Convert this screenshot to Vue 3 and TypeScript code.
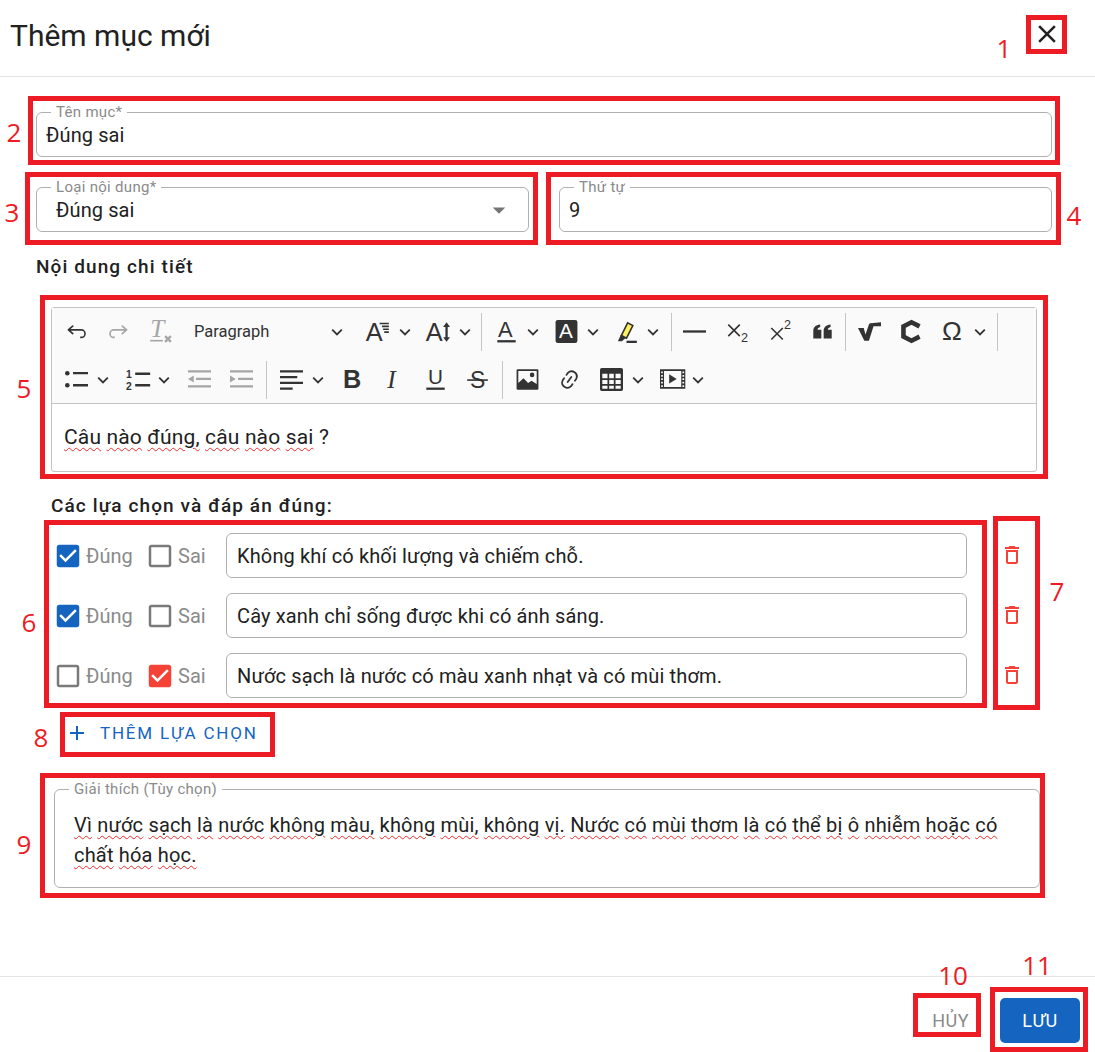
<script setup lang="ts">
// Hộp thoại "Thêm mục mới" với các chú thích đỏ đánh số
type Tool = { icon: string; w: number; chevron?: boolean; off?: boolean } | { sep: true; ml?: number; mr?: number }

const row1: Tool[] = [
  { icon: 'undo', w: 42 },
  { icon: 'redo', w: 42, off: true },
  { icon: 'clear', w: 42, off: true },
  { icon: 'paragraph', w: 176, chevron: true },
  { icon: 'fontsize', w: 60, chevron: true },
  { icon: 'lineheight', w: 60, chevron: true },
  { sep: true },
  { icon: 'fontcolor', w: 60, chevron: true },
  { icon: 'bgcolor', w: 60, chevron: true },
  { icon: 'highlight', w: 62, chevron: true },
  { sep: true, ml: 4, mr: 1 },
  { icon: 'hr', w: 43 },
  { icon: 'sub', w: 43 },
  { icon: 'sup', w: 42 },
  { icon: 'quote', w: 42 },
  { sep: true, ml: 2, mr: 2 },
  { icon: 'sqrt', w: 42 },
  { icon: 'hex', w: 42 },
  { icon: 'omega', w: 61, chevron: true },
  { sep: true }
]

const row2: Tool[] = [
  { icon: 'bullet', w: 61, chevron: true },
  { icon: 'number', w: 62, chevron: true },
  { icon: 'outdent', w: 42, off: true },
  { icon: 'indent', w: 42, off: true },
  { sep: true },
  { icon: 'align', w: 60, chevron: true },
  { icon: 'bold', w: 42 },
  { icon: 'italic', w: 42 },
  { icon: 'underline', w: 42 },
  { icon: 'strike', w: 42 },
  { sep: true },
  { icon: 'image', w: 42 },
  { icon: 'link', w: 42 },
  { icon: 'table', w: 60, chevron: true },
  { icon: 'video', w: 60, chevron: true }
]

const choices = [
  { text: 'Không khí có khối lượng và chiếm chỗ.', correct: true },
  { text: 'Cây xanh chỉ sống được khi có ánh sáng.', correct: true },
  { text: 'Nước sạch là nước có màu xanh nhạt và có mùi thơm.', correct: false }
]

const explainOne = ['Vì', 'nước', 'sạch', 'là', 'nước', 'không', 'màu,', 'không', 'mùi,', 'không', 'vị.', 'Nước', 'có', 'mùi', 'thơm', 'là', 'có', 'thể', 'bị', 'ô', 'nhiễm', 'hoặc', 'có']
const explainTwo = ['chất', 'hóa', 'học.']
const question = ['Câu', 'nào', 'đúng,', 'câu', 'nào', 'sai']

// Khung chú thích đỏ: x, y, rộng, cao
const marks = [
  [1026, 15, 41, 39],
  [28, 96, 1032, 69],
  [25, 172, 513, 73],
  [546, 172, 515, 73],
  [40, 295, 1008, 184],
  [44, 520, 943, 188],
  [993, 516, 47, 194],
  [60, 712, 215, 45],
  [40, 773, 1005, 125],
  [913, 993, 68, 44],
  [990, 987, 98, 65]
]

const labels = [
  ['1', 1004, 48], ['2', 14, 132], ['3', 12, 212], ['4', 1074, 215], ['5', 24, 388], ['6', 29, 622],
  ['7', 1057, 591], ['8', 41, 737], ['9', 24, 844], ['10', 953, 975], ['11', 1037, 965]
] as const
</script>

<template>
  <div class="dialog">
    <header class="head">
      <h2 class="title">Thêm mục mới</h2>
      <button class="close" aria-label="Đóng">
        <svg viewBox="0 0 24 24" width="30" height="30"><path d="M19 6.41 17.59 5 12 10.59 6.41 5 5 6.41 10.59 12 5 17.59 6.41 19 12 13.41 17.59 19 19 17.59 13.41 12z" /></svg>
      </button>
    </header>

    <main class="body">
      <fieldset class="field">
        <legend>Tên mục*</legend>
        <div class="value">Đúng sai</div>
      </fieldset>

      <div class="pair">
        <fieldset class="field select">
          <legend>Loại nội dung*</legend>
          <div class="value">Đúng sai</div>
          <svg class="caret" viewBox="0 0 24 24" width="30" height="30"><path d="M7 10l5 5 5-5z" /></svg>
        </fieldset>
        <fieldset class="field">
          <legend>Thứ tự</legend>
          <div class="value">9</div>
        </fieldset>
      </div>

      <div class="section">Nội dung chi tiết</div>

      <div class="editor">
        <div class="toolbar">
          <div v-for="(row, r) in [row1, row2]" :key="r" class="tool-row">
            <template v-for="(tool, i) in row" :key="i">
              <span
                v-if="'sep' in tool"
                class="sep"
                :style="{ marginLeft: (tool.ml ?? 4) + 'px', marginRight: (tool.mr ?? 3) + 'px' }"
              ></span>
              <span v-else class="tool" :class="{ off: tool.off }" :style="{ width: tool.w + 'px' }">
                <span v-if="tool.icon === 'paragraph'" class="para">Paragraph</span>
                <svg v-else class="ico" viewBox="0 0 20 20" width="23" height="23">
                  <g v-if="tool.icon === 'undo'"><path class="solid" d="m5.042 9.367 2.189 1.837a.75.75 0 0 1-.965 1.149l-3.788-3.18a.747.747 0 0 1-.21-.284.75.75 0 0 1 .17-.945L6.23 4.762a.75.75 0 1 1 .964 1.15L4.863 7.866h8.917A4 4 0 1 1 14 15.85l-.8-.001v-1.5h.8a2.5 2.5 0 1 0 .001-4.982H5.042z" /></g>
                  <g v-else-if="tool.icon === 'redo'"><path class="solid" d="m14.958 9.367-2.189 1.837a.75.75 0 0 0 .965 1.149l3.788-3.18a.747.747 0 0 0 .21-.284.75.75 0 0 0-.17-.945L13.77 4.762a.75.75 0 1 0-.964 1.15l2.331 1.955H6.22A4 4 0 1 0 6 15.85l.8-.001v-1.5H6a2.5 2.5 0 1 1-.001-4.982h8.959z" /></g>
                  <g v-else-if="tool.icon === 'clear'">
                    <text x="1" y="15" class="t it serif" font-size="22">T</text>
                    <path class="line" d="M1 18h11" />
                    <path class="line bold" d="m14 14 5 5m0-5-5 5" />
                  </g>
                  <g v-else-if="tool.icon === 'fontsize'">
                    <text x="-1" y="18" class="t" font-size="22">A</text>
                    <path class="line" d="M11 3h8M13 5.5h6M14 8h5M15 10.5h4" />
                  </g>
                  <g v-else-if="tool.icon === 'lineheight'">
                    <text x="-1" y="18" class="t" font-size="22">A</text>
                    <path class="line bold" d="M17 4v13" />
                    <path class="solid" d="M14 6l3-4 3 4zM14 15l3 4 3-4z" />
                  </g>
                  <g v-else-if="tool.icon === 'fontcolor'">
                    <text x="2.500" y="15" class="t" font-size="19">A</text>
                    <path class="line bold" d="M2 18.500h16" />
                  </g>
                  <g v-else-if="tool.icon === 'bgcolor'">
                    <rect x="0.500" y="0" width="19" height="20" rx="2" class="solid" />
                    <text x="3.500" y="16" class="t light" font-size="18">A</text>
                  </g>
                  <g v-else-if="tool.icon === 'highlight'">
                    <path d="M5.500 13.500 11 2.500l4.500 2.300-5.500 11z" fill="#fff35c" stroke="#333" stroke-width="1.400" />
                    <path class="solid" d="m5 13 4.500 2.500L6 18.500H2.500z" />
                    <path class="line bold" d="M10 19h9" />
                  </g>
                  <path v-else-if="tool.icon === 'hr'" class="line bold" d="M0 10h20" />
                  <g v-else-if="tool.icon === 'sub'">
                    <path class="line" d="m2 4 10 10M12 4 2 14" />
                    <text x="13" y="19" class="t" font-size="11">2</text>
                  </g>
                  <g v-else-if="tool.icon === 'sup'">
                    <path class="line" d="m2 7 10 10M12 7 2 17" />
                    <text x="13" y="8" class="t" font-size="11">2</text>
                  </g>
                  <path v-else-if="tool.icon === 'quote'" class="solid" d="M2 16V9.500C2 6.500 4 4.500 8 4v2c-1.500.3-2.300 1.200-2.300 2.500H9V16zM11 16V9.500c0-3 2-5 6-5.500v2c-1.500.3-2.300 1.200-2.300 2.500H18V16z" />
                  <path v-else-if="tool.icon === 'sqrt'" class="solid" d="M0 7h5l1.500 5.500L9.500 4c.3-.8.8-1.200 1.500-1.200L20 2v3.500h-6.500L9.500 18h-4z" />
                  <path v-else-if="tool.icon === 'hex'" class="hexa" d="M17 5.500 10 2 3 5.500v9l7 3.500 7-3.500" />
                  <text v-else-if="tool.icon === 'omega'" x="0" y="17.500" class="t" font-size="23">Ω</text>
                  <g v-else-if="tool.icon === 'bullet'">
                    <circle cx="2" cy="4.500" r="2" class="solid" />
                    <circle cx="2" cy="15" r="2" class="solid" />
                    <path class="line bold" d="M7 4.500h13M7 15h13" />
                  </g>
                  <g v-else-if="tool.icon === 'number'">
                    <text x="0" y="9" class="t b" font-size="9">1</text>
                    <text x="0" y="19" class="t b" font-size="9">2</text>
                    <path class="line bold" d="M8 5h13M8 15h13" />
                  </g>
                  <g v-else-if="tool.icon === 'outdent'">
                    <path class="line bold" d="M0 3h20M7 9.500h13M0 16h20" />
                    <path class="solid" d="M5 6.500v6L0 9.500z" />
                  </g>
                  <g v-else-if="tool.icon === 'indent'">
                    <path class="line bold" d="M0 3h20M7 9.500h13M0 16h20" />
                    <path class="solid" d="M0 6.500v6l5-3z" />
                  </g>
                  <path v-else-if="tool.icon === 'align'" class="line bold" d="M0 3h20M0 8h15M0 13h20M0 18h11" />
                  <text v-else-if="tool.icon === 'bold'" x="2.500" y="17" class="t b" font-size="22">B</text>
                  <text v-else-if="tool.icon === 'italic'" x="4.500" y="17" class="t it serif" font-size="22">I</text>
                  <g v-else-if="tool.icon === 'underline'">
                    <text x="3.500" y="14" class="t" font-size="18">U</text>
                    <path class="line bold" d="M2 18h16" />
                  </g>
                  <g v-else-if="tool.icon === 'strike'">
                    <text x="3.500" y="17" class="t" font-size="20">S</text>
                    <path class="line" d="M1 10.500h18" />
                  </g>
                  <g v-else-if="tool.icon === 'image'">
                    <path class="solid" fill-rule="evenodd" d="M1.500 1h17a1 1 0 0 1 1 1v16a1 1 0 0 1-1 1h-17a1 1 0 0 1-1-1V2a1 1 0 0 1 1-1zm.5 1.500V13l4.500-4 4 4 3-2 4.500 3V2.500zM14 4a2 2 0 1 1 0 4 2 2 0 0 1 0-4z" />
                  </g>
                  <path v-else-if="tool.icon === 'link'" class="solid" d="m11.077 15 .991-1.416a.75.75 0 1 1 1.229.86l-1.148 1.64a.748.748 0 0 1-.217.206 5.251 5.251 0 0 1-8.503-5.955.741.741 0 0 1 .12-.274l1.147-1.639a.75.75 0 1 1 1.228.86L4.933 10.7l.006.003a3.75 3.75 0 0 0 6.132 4.294l.006.004zm5.494-5.335a.748.748 0 0 1-.12.274l-1.147 1.639a.75.75 0 1 1-1.228-.86l.86-1.23a3.75 3.75 0 0 0-6.144-4.301l-.86 1.229a.75.75 0 0 1-1.229-.86l1.148-1.64a.748.748 0 0 1 .217-.206 5.251 5.251 0 0 1 8.503 5.955zm-4.563-2.532a.75.75 0 0 1 .184 1.045l-3.155 4.505a.75.75 0 1 1-1.229-.86l3.155-4.506a.75.75 0 0 1 1.045-.184z" />
                  <g v-else-if="tool.icon === 'table'">
                    <path class="solid" fill-rule="evenodd" d="M1.500 0h17A1.500 1.500 0 0 1 20 1.500v17a1.500 1.500 0 0 1-1.500 1.500h-17A1.500 1.500 0 0 1 0 18.500v-17A1.500 1.500 0 0 1 1.500 0zM2 5v4h4.500V5zm6 0v4h4V5zm5.500 0v4H18V5zM2 10.500V14h4.500v-3.500zm6 0V14h4v-3.500zm5.500 0V14H18v-3.500zM2 15.500V18h4.500v-2.500zm6 0V18h4v-2.500zm5.500 0V18H18v-2.500z" />
                  </g>
                  <g v-else-if="tool.icon === 'video'">
                    <path class="solid" fill-rule="evenodd" d="M0 1h22v17H0zm3.500 1.500v14h15v-14zM1 3v1.500h1.500V3zm0 3v1.500h1.500V6zm0 3v1.500h1.500V9zm0 3v1.500h1.500V12zm0 3v1.500h1.500V15zM19.500 3v1.500H21V3zm0 3v1.500H21V6zm0 3v1.500H21V9zm0 3v1.500H21V12zm0 3v1.500H21V15z" />
                    <path class="solid" d="M8 5.500v8l6.500-4z" />
                  </g>
                </svg>
                <svg v-if="tool.chevron" class="chev" viewBox="0 0 10 10" width="12" height="12"><path d="M1 3l4 4 4-4" /></svg>
              </span>
            </template>
          </div>
        </div>
        <div class="editable">
          <template v-for="w in question" :key="w"><span class="typo">{{ w }}</span>{{ ' ' }}</template>?
        </div>
      </div>

      <div class="section indented">Các lựa chọn và đáp án đúng:</div>

      <div v-for="(c, i) in choices" :key="i" class="choice">
        <label class="check">
          <svg v-if="c.correct" class="box blue" viewBox="0 0 24 24" width="30" height="30"><path d="M19 3H5c-1.110 0-2 .9-2 2v14c0 1.100.89 2 2 2h14c1.110 0 2-.9 2-2V5c0-1.100-.89-2-2-2zm-9 14l-5-5 1.410-1.410L10 14.170l7.590-7.590L19 8l-9 9z" /></svg>
          <svg v-else class="box" viewBox="0 0 24 24" width="30" height="30"><path d="M19 5v14H5V5h14m0-2H5c-1.100 0-2 .9-2 2v14c0 1.100.9 2 2 2h14c1.100 0 2-.9 2-2V5c0-1.100-.9-2-2-2z" /></svg>
          <span>Đúng</span>
        </label>
        <label class="check sai">
          <svg v-if="!c.correct" class="box red" viewBox="0 0 24 24" width="30" height="30"><path d="M19 3H5c-1.110 0-2 .9-2 2v14c0 1.100.89 2 2 2h14c1.110 0 2-.9 2-2V5c0-1.100-.89-2-2-2zm-9 14l-5-5 1.410-1.410L10 14.170l7.590-7.590L19 8l-9 9z" /></svg>
          <svg v-else class="box" viewBox="0 0 24 24" width="30" height="30"><path d="M19 5v14H5V5h14m0-2H5c-1.100 0-2 .9-2 2v14c0 1.100.9 2 2 2h14c1.100 0 2-.9 2-2V5c0-1.100-.9-2-2-2z" /></svg>
          <span>Sai</span>
        </label>
        <div class="choice-input">{{ c.text }}</div>
        <svg class="trash" viewBox="0 0 24 24" width="24" height="24"><path d="M6 19c0 1.100.9 2 2 2h8c1.100 0 2-.9 2-2V7H6v12zM8 9h8v10H8V9zm7.500-5l-1-1h-5l-1 1H5v2h14V4z" /></svg>
      </div>

      <button class="add">
        <svg viewBox="0 0 24 24" width="24" height="24"><path d="M19 13h-6v6h-2v-6H5v-2h6V5h2v6h6v2z" /></svg>
        <span>THÊM LỰA CHỌN</span>
      </button>

      <fieldset class="field explain">
        <legend>Giải thích (Tùy chọn)</legend>
        <div class="explain-text">
          <div><template v-for="(w, i) in explainOne" :key="i"><span class="typo">{{ w }}</span>{{ ' ' }}</template></div>
          <div><template v-for="(w, i) in explainTwo" :key="i"><span class="typo">{{ w }}</span>{{ ' ' }}</template></div>
        </div>
      </fieldset>
    </main>

    <footer class="foot">
      <button class="cancel">HỦY</button>
      <button class="save">LƯU</button>
    </footer>

    <!-- chú thích đỏ phủ lên ảnh -->
    <div
      v-for="(m, i) in marks"
      :key="'m' + i"
      class="mark"
      :style="{ left: m[0] + 'px', top: m[1] + 'px', width: m[2] + 'px', height: m[3] + 'px' }"
    ></div>
    <span
      v-for="l in labels"
      :key="l[0]"
      class="mark-no"
      :style="{ left: l[1] + 'px', top: l[2] + 'px' }"
    >{{ l[0] }}</span>
  </div>
</template>

<style scoped>
.dialog {
  position: relative;
  display: flex;
  flex-direction: column;
  width: 1095px;
  height: 1052px;
  overflow: hidden;
  background: #fff;
  color: #212121;
  font-family: Roboto, "Noto Sans", sans-serif;
}

.head {
  display: flex;
  align-items: center;
  justify-content: space-between;
  height: 77px;
  box-sizing: border-box;
  padding: 0 33px 5px 10px;
  border-bottom: 1px solid #e4e4e4;
}

.title {
  margin: 0;
  font-size: 30px;
  font-weight: 400;
}

.close {
  display: flex;
  padding: 0;
  border: 0;
  background: none;
  fill: #212121;
  margin-top: -3px;
}

.body {
  flex: 1;
  display: flex;
  flex-direction: column;
  padding: 27px 43px 0 36px;
}

.field {
  position: relative;
  margin: 0;
  min-width: 0;
  padding: 0 9px;
  border: 1px solid #b0b0b0;
  border-radius: 6px;
}

.field legend {
  margin-left: 5px;
  padding: 0 5px;
  font-size: 15px;
  line-height: 16px;
  letter-spacing: 0.3px;
  color: #8a8a8a;
}

.value {
  height: 36px;
  line-height: 30px;
  font-size: 20px;
  letter-spacing: 0.1px;
}

.pair {
  display: flex;
  gap: 30px;
  margin-top: 22px;
}

.pair .field {
  flex: 1;
}

.pair .select {
  flex: 0 0 493px;
  box-sizing: border-box;
}

.select .value {
  padding-left: 10px;
}

.caret {
  position: absolute;
  right: 14px;
  top: 0;
  fill: #757575;
}

.section {
  margin-top: 23px;
  font-size: 19px;
  line-height: 24px;
  font-weight: 500;
  letter-spacing: 1.1px;
}

.indented {
  margin-top: 22px;
  margin-left: 15px;
}

.editor {
  margin: 28px 15px 0 15px;
  border: 1px solid #c4c4c4;
  border-radius: 3px;
}

.toolbar {
  display: flex;
  flex-direction: column;
  gap: 1px;
  height: 95px;
  background: #fafafa;
  border-bottom: 1px solid #c4c4c4;
  padding: 0 0 0 3px;
}

.tool-row {
  display: flex;
  flex: none;
  height: 47px;
  align-items: center;
}

.tool {
  display: flex;
  align-items: center;
  height: 38px;
  padding-left: 10px;
  box-sizing: border-box;
  flex: none;
}

.tool.off {
  opacity: 0.42;
}

.sep {
  flex: none;
  width: 1px;
  height: 38px;
  background: #c4c4c4;
}

.para {
  flex: none;
  width: 128px;
  margin-left: 3px;
  font-size: 16.500px;
  color: #333;
}

.ico {
  flex: none;
  overflow: visible;
}

.chev {
  flex: none;
  margin-left: 9px;
  fill: none;
  stroke: #333;
  stroke-width: 1.500;
}

.solid {
  fill: #333;
}

.line {
  fill: none;
  stroke: #333;
  stroke-width: 1.400;
}

.line.bold {
  stroke-width: 2;
}

.hexa {
  fill: none;
  stroke: #333;
  stroke-width: 4;
}

.t {
  fill: #333;
  font-family: "Liberation Sans", sans-serif;
}

.t.light {
  fill: #fff;
}

.t.b {
  font-weight: 700;
}

.t.it {
  font-style: italic;
}

.t.serif {
  font-family: "Liberation Serif", serif;
}

.editable {
  height: 67px;
  box-sizing: border-box;
  padding: 19px 12px 0;
  font-size: 21px;
  line-height: 28px;
  letter-spacing: 0.15px;
}

.typo {
  text-decoration: underline wavy #ef2b2b;
  text-decoration-thickness: 1px;
  text-underline-offset: 3px;
}

.choice {
  display: flex;
  align-items: center;
  height: 45px;
  margin: 0 0 15px 17px;
}

.section.indented + .choice {
  margin-top: 15px;
}

.check {
  display: flex;
  align-items: center;
  width: 92px;
  flex: none;
  font-size: 20px;
  color: #8a8a8a;
}

.check.sai {
  width: 81px;
}

.box {
  flex: none;
  margin-right: 3px;
  fill: #7a7a7a;
}

.box.blue {
  fill: #1565c0;
}

.box.red {
  fill: #f44336;
}

.choice-input {
  box-sizing: border-box;
  width: 741px;
  height: 45px;
  line-height: 45px;
  padding-left: 10px;
  font-size: 20px;
  letter-spacing: 0.14px;
  border: 1px solid #b0b0b0;
  border-radius: 6px;
}

.trash {
  margin: -2px 0 0 33px;
  fill: #f44336;
}

.add {
  display: flex;
  align-items: center;
  align-self: flex-start;
  margin: 2px 0 0 29px;
  padding: 0;
  height: 36px;
  border: 0;
  background: none;
  color: #1565c0;
  fill: #1565c0;
  font: 400 17px Roboto, sans-serif;
  letter-spacing: 1.800px;
}

.add span {
  margin-left: 11px;
}

.explain {
  margin: 30px 12px 0 18px;
}

.explain-text {
  height: 90px;
  padding: 13px 10px 0;
  box-sizing: border-box;
  font-size: 20px;
  line-height: 30px;
  letter-spacing: 0.18px;
}

.foot {
  display: flex;
  align-items: center;
  justify-content: flex-end;
  height: 76px;
  box-sizing: border-box;
  padding: 11px 15px 0 0;
  border-top: 1px solid #e4e4e4;
  gap: 31px;
}

.foot button {
  border: 0;
  font: 400 18px Roboto, sans-serif;
  letter-spacing: 0.5px;
}

.cancel {
  padding: 0;
  background: none;
  color: #8a8a8a;
}

.save {
  width: 80px;
  height: 45px;
  background: #1565c0;
  color: #fff;
  border-radius: 5px;
}

.mark {
  position: absolute;
  box-sizing: border-box;
  border: 5px solid #ed1c24;
  pointer-events: none;
}

.mark-no {
  position: absolute;
  transform: translate(-50%, -50%);
  font: 26px "Open Sans", sans-serif;
  color: #ed1c24;
  line-height: 1;
}
</style>

<style>
html,
body {
  margin: 0;
  background: #fff;
}
</style>
